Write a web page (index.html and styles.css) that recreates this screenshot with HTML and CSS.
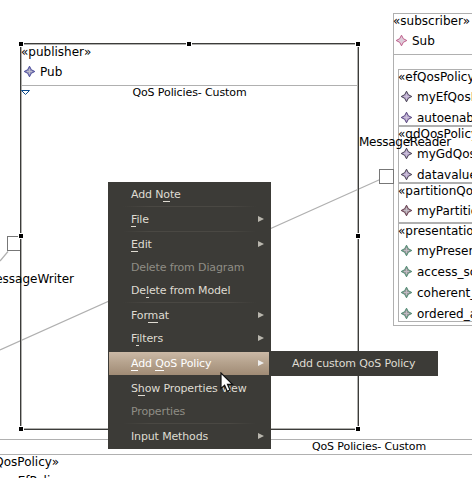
FILE: index.html
```html
<!DOCTYPE html>
<html lang="en">
<head>
<meta charset="utf-8">
<title>QoS Diagram</title>
<link rel="stylesheet" href="styles.css">
</head>
<body>
<svg class="defs" width="0" height="0" aria-hidden="true">
  <symbol id="star" viewBox="0 0 11 11">
    <path d="M5.5 0.2 L7.3 3.700 L10.8 5.5 L7.3 7.3 L5.5 10.8 L3.7 7.3 L0.2 5.5 L3.7 3.7 Z" stroke="currentColor" stroke-width="1"/>
    <path d="M5.5 3v5M3 5.5h5" stroke="#d4d0dc" stroke-width="1" opacity=".65"/>
  </symbol>
</svg>
<main class="canvas">
  <div class="strip"><span class="small">QoS Policies- Custom</span></div>
  <svg class="links" width="472" height="478" fill="none" stroke="#b0b0b0" stroke-width="1.200">
    <path d="M0 350 L380 179.5M8 251.500L0 261"/>
  </svg>
  <div class="port port-writer"></div>

  <section class="publisher">
    <div class="inner">
      <header class="head">
        <div class="stereo">«publisher»</div>
        <div class="entry blue"><svg class="star"><use href="#star"/></svg><span>Pub</span></div>
      </header>
      <div class="compartment">
        <svg class="twisty" width="9" height="6" viewBox="0 0 9 6"><path d="M.5 .5H8.500L4.500 4.500Z" fill="#fff" stroke="#0a4a8c"/></svg>
        <span class="small">QoS Policies- Custom</span>
      </div>
    </div>
  </section>
  <i class="handle h-nw"></i><i class="handle h-n"></i><i class="handle h-ne"></i>
  <i class="handle h-w"></i><i class="handle h-e"></i>
  <i class="handle h-sw"></i><i class="handle h-se"></i>

  <section class="subscriber">
    <header class="head sub-head">
      <div class="stereo">«subscriber»</div>
      <div class="entry pink"><svg class="star"><use href="#star"/></svg><span>Sub</span></div>
    </header>
    <div class="policies">
      <div class="policy p-ef">
        <div class="stereo">«efQosPolicy»</div>
        <div class="entry violet dark"><svg class="star"><use href="#star"/></svg><span>myEfQosPolicy</span></div>
        <div class="entry violet"><svg class="star"><use href="#star"/></svg><span>autoenable</span></div>
      </div>
      <div class="policy p-gd">
        <div class="stereo">«gdQosPolicy»</div>
        <div class="entry violet dark"><svg class="star"><use href="#star"/></svg><span>myGdQosPolicy</span></div>
        <div class="entry violet dark"><svg class="star"><use href="#star"/></svg><span>datavalue</span></div>
      </div>
      <div class="policy p-part">
        <div class="stereo">«partitionQosPolicy»</div>
        <div class="entry maroon"><svg class="star"><use href="#star"/></svg><span>myPartition</span></div>
      </div>
      <div class="policy p-pres">
        <div class="stereo">«presentationQosPolicy»</div>
        <div class="entry green"><svg class="star"><use href="#star"/></svg><span>myPresentation</span></div>
        <div class="entry green"><svg class="star"><use href="#star"/></svg><span>access_scope</span></div>
        <div class="entry green"><svg class="star"><use href="#star"/></svg><span>coherent_access</span></div>
        <div class="entry green"><svg class="star"><use href="#star"/></svg><span>ordered_access</span></div>
      </div>
    </div>
  </section>
  <div class="port port-reader"></div>
  <div class="label l-reader">MessageReader</div>
  <div class="label l-writer">MessageWriter</div>
  <div class="label l-policy">efQosPolicy»</div>
  <div class="label l-cut">myEfPolicy</div>

  <nav class="menu">
    <div class="item"><span>Add N<u>o</u>te</span></div>
    <hr>
    <div class="item more"><span><u>F</u>ile</span></div>
    <hr>
    <div class="item more"><span><u>E</u>dit</span></div>
    <div class="item off"><span>Delete from Diagram</span></div>
    <div class="item"><span>De<u>l</u>ete from Model</span></div>
    <hr>
    <div class="item more"><span>For<u>m</u>at</span></div>
    <div class="item more"><span>F<u>i</u>lters</span></div>
    <hr class="blank">
    <div class="item more active"><span><u>A</u>dd <u>Q</u>oS Policy</span></div>
    <hr class="blank">
    <div class="item"><span>S<u>h</u>ow Properties View</span></div>
    <div class="item off"><span>Properties</span></div>
    <hr>
    <div class="item more"><span>Input Methods</span></div>
  </nav>
  <nav class="menu submenu"><div class="item"><span>Add custom QoS Policy</span></div></nav>
  <svg class="cursor" width="14" height="21" viewBox="0 0 14 21"><path d="M1 1V16.500L4.600 13.300L7.200 19.300L10 18L7.500 12.300H12.500Z" fill="#fff" stroke="#111" stroke-width="1.200"/></svg>
</main>
</body>
</html>
```
FILE: styles.css
```css
* { box-sizing: border-box; }
body { margin: 0; background: #fff; }
.defs { position: absolute; }
.canvas {
  position: relative;
  width: 472px;
  height: 478px;
  overflow: hidden;
  color: #000;
  font: 12px/16px "DejaVu Sans", sans-serif;
  white-space: nowrap;
}
.small {
  font-size: 11px;
  line-height: 13px;
  letter-spacing: -0.1px;
}
.links { position: absolute; left: 0; top: 0; }

.strip {
  position: absolute;
  left: -2px;
  top: 439px;
  width: 742px;
  height: 16px;
  border: 1px solid #b0b0b0;
  text-align: center;
  line-height: 13px;
}

.publisher {
  position: absolute;
  left: 20px;
  top: 43px;
  width: 339px;
  height: 387px;
  border: 1px solid #3c3c3a;
}
.inner { height: 100%; border: 1px solid #b0b0ae; }
.head { height: 41px; border-bottom: 1px solid #b0b0b0; }
.stereo { height: 16px; line-height: 14px; margin-left: -1px; }
.entry { display: flex; align-items: center; gap: 5px; height: 21px; padding-left: 2px; line-height: 16px; }
.star { width: 11px; height: 11px; flex: none; fill: #9a98b0; color: #444; }
.blue .star { color: #4b4b9c; fill: #9494b8; }
.pink .star { color: #bd5f8c; fill: #e4cbd8; }
.violet .star { color: #54447c; fill: #b9a5cf; }
.dark .star { color: #44404f; }
.maroon .star { color: #62374b; fill: #a999a0; }
.green .star { color: #4c8b72; fill: #999; }
.compartment { display: flex; justify-content: center; position: relative; }
.twisty { position: absolute; left: -1px; top: 4px; }

.handle { position: absolute; width: 6px; height: 6px; background: #000; border: 1px solid #fff; }
.h-nw, .h-w, .h-sw { left: 18px; }
.h-n { left: 186px; }
.h-ne, .h-e, .h-se { left: 355px; }
.h-nw, .h-n, .h-ne { top: 41px; }
.h-w, .h-e { top: 233px; }
.h-sw, .h-se { top: 426px; }

.subscriber {
  position: absolute;
  left: 393px;
  top: 13px;
  width: 200px;
  height: 313px;
  border: 1px solid #b0b0b0;
}
.policies { margin: 14px 0 0 4px; display: flex; flex-direction: column; }
.policy { border: 1px solid #b0b0b0; }
.p-ef { height: 57px; }
.p-gd { height: 57px; }
.p-part { height: 40px; }
.p-pres { height: 99px; }

.port { position: absolute; width: 15px; height: 15px; background: #fff; border: 1px solid #777; }
.port-writer { left: 7px; top: 236px; }
.port-reader { left: 379px; top: 169px; }
.label { position: absolute; }
.l-reader { left: 359px; top: 134px; letter-spacing: -0.25px; }
.l-writer { right: 398px; top: 271px; }
.l-policy { right: 413px; top: 454px; }
.l-cut { right: 408px; top: 473px; }

.menu {
  position: absolute;
  left: 108px;
  top: 182px;
  width: 163px;
  padding: 1px;
  background: #3c3b37;
  color: #dfdbd2;
  font-size: 11px;
  line-height: 13px;
  letter-spacing: -0.14px;
}
.item { display: flex; align-items: center; justify-content: space-between; height: 23px; padding: 0 6px 0 22px; }
.item u { text-decoration: none; box-shadow: 0 1px 0 currentColor; }
.more::after { content: ""; border: 3px solid transparent; border-left: 6px solid #b9b6ad; border-right: 0; position: relative; top: -1px; }
.off { color: #8f8d85; }
.menu hr { height: 2px; margin: 0 14px; border: 0; background: linear-gradient(90deg, transparent, #4a4843 20%, #4a4843 80%, transparent) 0 0 / 100% 1px no-repeat; }
.menu .blank { background: none; }
.active { width: 160px; padding-right: 5px; color: #fff; background: linear-gradient(#cbb9a6, #b6a38e 45%, #a08b75); }
.active::after { border-left-color: #eee; }
.submenu { left: 269px; top: 351px; width: 169px; }
.cursor { position: absolute; left: 220px; top: 372px; }
```
